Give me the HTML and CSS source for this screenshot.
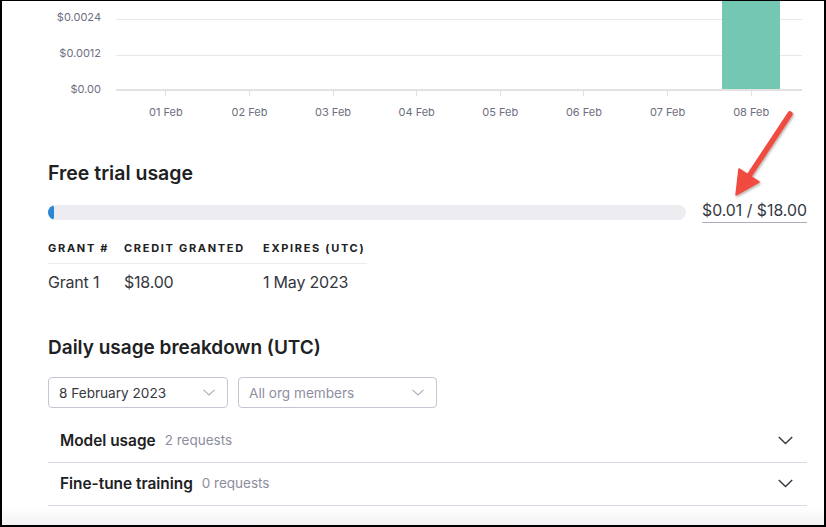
FILE: index.html
```html
<!DOCTYPE html>
<html lang="en">
<head>
<meta charset="utf-8">
<title>Usage</title>
<link rel="stylesheet" href="styles.css">
</head>
<body>
<div class="frame">
  <div class="content">
    <section class="chart">
      <div class="yaxis">
        <span>$0.0024</span>
        <span>$0.0012</span>
        <span>$0.00</span>
      </div>
      <div class="plotwrap">
        <div class="plot">
          <div class="col"></div>
          <div class="col"></div>
          <div class="col"></div>
          <div class="col"></div>
          <div class="col"></div>
          <div class="col"></div>
          <div class="col"></div>
          <div class="col"><div class="bar" style="height:100%"></div></div>
        </div>
        <div class="xaxis">
          <div class="xcol"><i class="tick"></i><span>01 Feb</span></div>
          <div class="xcol"><i class="tick"></i><span>02 Feb</span></div>
          <div class="xcol"><i class="tick"></i><span>03 Feb</span></div>
          <div class="xcol"><i class="tick"></i><span>04 Feb</span></div>
          <div class="xcol"><i class="tick"></i><span>05 Feb</span></div>
          <div class="xcol"><i class="tick"></i><span>06 Feb</span></div>
          <div class="xcol"><i class="tick"></i><span>07 Feb</span></div>
          <div class="xcol"><i class="tick"></i><span>08 Feb</span></div>
        </div>
      </div>
    </section>

    <h2 class="heading h-trial">Free trial usage</h2>
    <div class="progress-row">
      <div class="track"><div class="fill"></div></div>
      <span class="amount">$0.01 / $18.00</span>
    </div>

    <table class="grants">
      <thead>
        <tr><th class="c1">Grant #</th><th class="c2">Credit granted</th><th class="c3">Expires (UTC)</th></tr>
      </thead>
      <tbody>
        <tr><td>Grant 1</td><td>$18.00</td><td>1 May 2023</td></tr>
      </tbody>
    </table>

    <h2 class="heading h-daily">Daily usage breakdown (UTC)</h2>
    <div class="filters">
      <div class="select s-date"><span>8 February 2023</span>
        <svg class="chev-sm" width="12" height="7" viewBox="0 0 12 7"><path d="M0.5 0.8 L6 6 L11.5 0.8" fill="none" stroke="#acacbe" stroke-width="1.1"/></svg>
      </div>
      <div class="select s-members"><span class="placeholder">All org members</span>
        <svg class="chev-sm" width="12" height="7" viewBox="0 0 12 7"><path d="M0.5 0.8 L6 6 L11.5 0.8" fill="none" stroke="#acacbe" stroke-width="1.1"/></svg>
      </div>
    </div>

    <div class="acc">
      <div class="acc-row"><span class="acc-title">Model usage</span><span class="acc-sub">2 requests</span>
        <svg class="chev" width="15" height="9" viewBox="0 0 15 9"><path d="M0.8 1 L7.5 7.6 L14.2 1" fill="none" stroke="#353740" stroke-width="1.4"/></svg>
      </div>
      <div class="acc-row"><span class="acc-title">Fine-tune training</span><span class="acc-sub">0 requests</span>
        <svg class="chev" width="15" height="9" viewBox="0 0 15 9"><path d="M0.8 1 L7.5 7.6 L14.2 1" fill="none" stroke="#353740" stroke-width="1.4"/></svg>
      </div>
    </div>
  </div>
  <div class="fade"></div>

  <svg class="arrow" width="826" height="527" viewBox="0 0 826 527">
    <defs>
      <filter id="sh" x="-20%" y="-20%" width="140%" height="140%">
        <feDropShadow dx="1" dy="1.5" stdDeviation="1.2" flood-color="#000" flood-opacity="0.3"/>
      </filter>
    </defs>
    <g filter="url(#sh)">
      <line x1="790" y1="114" x2="749" y2="176" stroke="#f04b41" stroke-width="5.5" stroke-linecap="round"/>
      <polygon points="736,195 739,169 759,182" fill="#f04b41" stroke="#f04b41" stroke-width="1.5" stroke-linejoin="round"/>
    </g>
  </svg>
</div>
</body>
</html>
```

FILE: styles.css
```css
* { box-sizing: border-box; }
html, body { margin: 0; padding: 0; background: #fff; }
body {
  font-family: Inter, "Noto Sans", "Liberation Sans", sans-serif;
  color: #353740;
}
.frame {
  position: relative;
  width: 826px;
  height: 527px;
  border-style: solid;
  border-color: #000;
  border-width: 1px 2px 2px 2px;
  overflow: hidden;
  display: flex;
  flex-direction: column;
}
.content {
  padding: 0 16px 0 46px;
}

/* chart */
.chart { display: flex; }
.yaxis {
  width: 53px;
  padding-top: 10px;
  display: flex;
  flex-direction: column;
  align-items: flex-end;
  gap: 24px;
  font-size: 11px;
  line-height: 12px;
  color: #6e6e80;
}
.plotwrap { margin-left: 15px; width: 686px; }
.plot {
  height: 90px;
  border-bottom: 2px solid #e2e2e2;
  background-image: linear-gradient(to bottom,
    transparent 18px, #e8e8e8 18px, #e8e8e8 19px, transparent 19px,
    transparent 54px, #e8e8e8 54px, #e8e8e8 55px, transparent 55px);
  display: flex;
  padding: 0 9px 0 8px;
}
.col {
  flex: 1;
  display: flex;
  align-items: flex-end;
  justify-content: center;
}
.bar { width: 58px; background: #74c7b3; }
.xaxis {
  display: flex;
  padding: 0 9px 0 8px;
}
.xcol {
  flex: 1;
  display: flex;
  flex-direction: column;
  align-items: center;
  font-size: 11px;
  line-height: 14px;
  color: #6e6e80;
}
.tick { display: block; width: 1px; height: 5px; background: #e0e0e0; }
.xcol span { margin-top: 9px; }

/* headings */
.heading {
  margin: 0;
  font-weight: 600;
  color: #202123;
}
.h-trial { font-size: 19.5px; line-height: 26px; margin-top: 41px; }
.h-daily { font-size: 19px; line-height: 26px; margin-top: 41px; }

/* progress */
.progress-row {
  display: flex;
  align-items: center;
  margin-top: 15px;
}
.track {
  flex: 0 0 638px;
  height: 15px;
  border-radius: 8px;
  background: #ececf1;
  overflow: hidden;
}
.fill { width: 6px; height: 100%; background: #2b87d3; border-radius: 8px; }
.amount {
  flex: none;
  white-space: nowrap;
  margin-left: 16px;
  font-size: 15.8px;
  line-height: 20px;
  padding-bottom: 1px;
  border-bottom: 1px solid #acacbe;
  color: #353740;
}

/* grants table */
.grants {
  margin-top: 17px;
  border-collapse: collapse;
}
.grants th {
  font-size: 11px;
  line-height: 16px;
  font-weight: 700;
  letter-spacing: 1.7px;
  text-transform: uppercase;
  text-align: left;
  color: #202123;
  padding: 0 0 7px 0;
  border-bottom: 1px solid #ececf1;
  white-space: nowrap;
}
.grants .c1 { width: 76px; }
.grants .c2 { width: 139px; }
.grants .c3 { width: 104px; }
.grants td {
  font-size: 16px;
  line-height: 24px;
  padding: 6px 0 0 0;
  color: #353740;
  letter-spacing: -0.2px;
  white-space: nowrap;
}

/* filters */
.filters { display: flex; gap: 10px; margin-top: 16px; }
.select {
  height: 31px;
  border: 1px solid #c5c5d2;
  border-radius: 4px;
  display: flex;
  align-items: center;
  justify-content: space-between;
  padding: 0 12px 0 10px;
  font-size: 13.6px;
  color: #353740;
}
.s-date { width: 180px; }
.s-members { width: 199px; }
.placeholder { color: #8e8ea0; }
.chev-sm { display: block; }

/* accordion */
.acc { margin-top: 12px; width: 759px; }
.acc-row {
  height: 43px;
  border-bottom: 1px solid #d9d9e3;
  display: flex;
  align-items: center;
  padding: 0 14px 2px 12px;
}
.acc-title { font-size: 15.4px; font-weight: 600; color: #202123; }
.acc-sub { margin-left: 9px; font-size: 13.5px; color: #8e8ea0; }
.chev { margin-left: auto; display: block; }

.fade {
  flex: 1;
  background: linear-gradient(to bottom, #ffffff, #f3f3f5);
}

.arrow {
  position: absolute;
  left: -2px;
  top: -1px;
  pointer-events: none;
}
```
